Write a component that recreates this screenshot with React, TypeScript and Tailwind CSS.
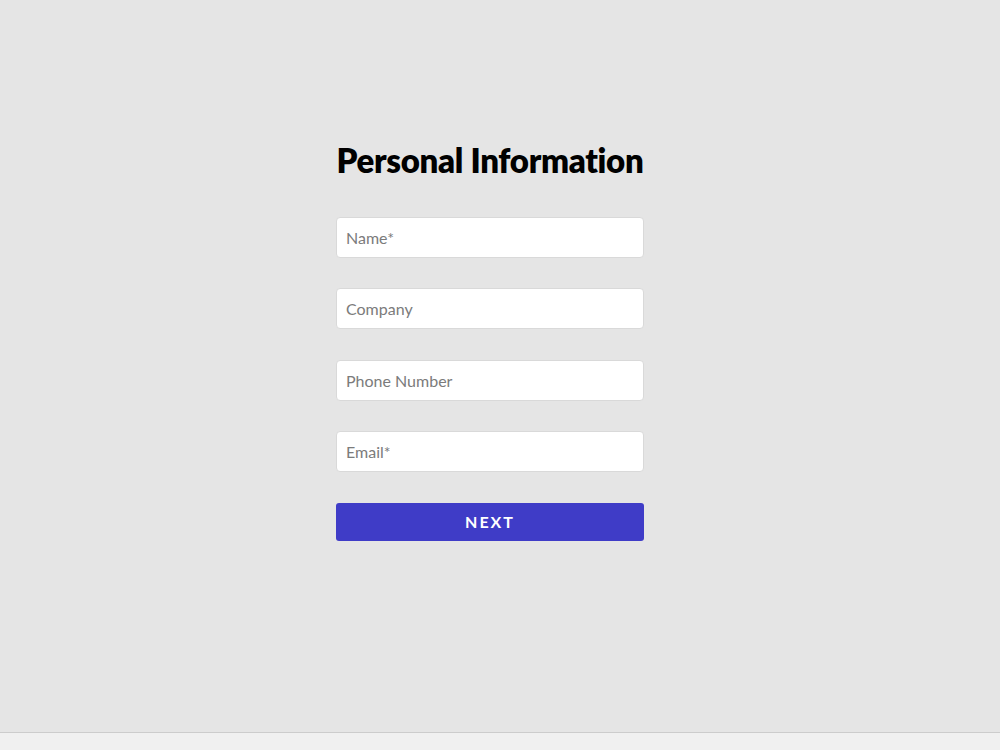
import { useState } from "react";

const fields = [
  { name: "name", placeholder: "Name*", type: "text" },
  { name: "company", placeholder: "Company", type: "text" },
  { name: "phone", placeholder: "Phone Number", type: "tel" },
  { name: "email", placeholder: "Email*", type: "email" },
];

export default function App() {
  const [values, setValues] = useState<Record<string, string>>({});

  return (
    <div className="flex h-[750px] flex-col font-['Lato','Inter',sans-serif]">
      <main className="flex h-[732px] justify-center bg-[#e5e5e5] pt-[140px] pr-[20px]">
        <form
          className="flex w-[308px] flex-col"
          onSubmit={(e) => e.preventDefault()}
        >
          <h1 className="mb-[37px] h-[40px] text-center text-[33px] leading-[40px] font-extrabold tracking-[-0.3px] whitespace-nowrap text-black">
            Personal Information
          </h1>
          <div className="flex flex-col gap-[30.4px]">
            {fields.map((f) => (
              <input
                key={f.name}
                type={f.type}
                placeholder={f.placeholder}
                value={values[f.name] || ""}
                onChange={(e) =>
                  setValues({ ...values, [f.name]: e.target.value })
                }
                className="h-[41px] w-full rounded-[4px] border border-[#d9d9d9] bg-white px-[9px] text-[16px] text-gray-800 outline-none placeholder:text-[#7b7b7b]"
              />
            ))}
          </div>
          <button
            type="submit"
            className="mt-[31px] h-[38px] w-full rounded-[3px] bg-[#3f3cc7] text-[16px] font-bold tracking-[2px] text-white"
          >
            NEXT
          </button>
        </form>
      </main>
      <div className="flex-1 border-t border-[#cccccc] bg-[#f0f0f0]" />
    </div>
  );
}
